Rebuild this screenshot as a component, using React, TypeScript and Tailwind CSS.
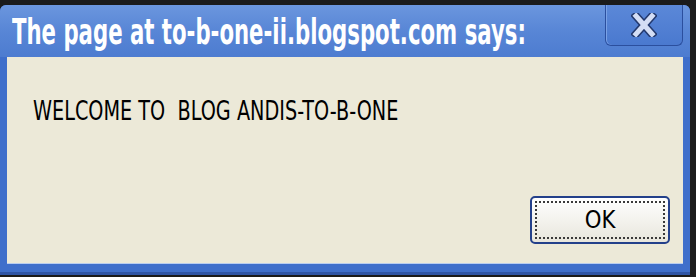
import React from 'react';

const CloseGlyph = () => (
  <svg width="26" height="24" viewBox="0 0 26 24">
    <path d="M5 3 L21 21 M21 3 L5 21" stroke="#23396e" strokeWidth="8" strokeLinecap="square" />
    <path d="M5 3 L21 21 M21 3 L5 21" stroke="#d4def5" strokeWidth="5" strokeLinecap="square" />
  </svg>
);

const font = { fontFamily: '"DejaVu Sans", "Liberation Sans", sans-serif' };

export default function App() {
  return (
    <div className="w-[696px] h-[277px] bg-[#1b1b1b] pt-[5px] overflow-hidden">
      <div className="w-[690px] h-[270px] flex flex-col bg-[#3f6fcb] rounded-t-[6px] border-b-[3px] border-[#2f55a6]">
        <header className="h-[52px] flex items-start justify-between pl-[12px] pr-[7px] bg-gradient-to-b from-[#6b96de] via-[#5886d6] to-[#4d7cd0] rounded-t-[6px]">
          <h1
            className="flex-1 min-w-0 mt-[9px] text-white text-[36px] font-bold leading-none whitespace-nowrap"
            style={font}
          >
            <span className="inline-block origin-left scale-x-[0.59]">The page at to-b-one-ii.blogspot.com says:</span>
          </h1>
          <div className="w-[78px] h-[41px] shrink-0 flex items-center justify-center rounded-b-[6px] border border-t-0 border-[#2b4f9e] bg-gradient-to-b from-[#5b88d8] to-[#4a79cf] shadow-[inset_1px_0_0_#7aa2e6]">
            <CloseGlyph />
          </div>
        </header>
        <div className="flex-1 flex px-[7px] pb-[8px]">
          <div className="flex-1 flex flex-col bg-[#ece9d8] border-b border-[#b9cdef]" style={font}>
            <p className="pl-[26px] pt-[41px] text-[26px] leading-[26px] text-black whitespace-pre">
              <span className="inline-block origin-left scale-x-[0.74]">WELCOME TO  BLOG ANDIS-TO-B-ONE</span>
            </p>
            <div className="flex-1 flex items-end justify-end pr-[13px] pb-[19px]">
              <button className="w-[140px] h-[48px] rounded-[5px] border-2 border-[#23408a] bg-gradient-to-b from-[#ffffff] to-[#e8e6dc] p-[3px]">
                <span className="flex h-full w-full items-center justify-center border-2 border-dotted border-[#3a3a3a] text-[25px] text-black">
                  <span className="inline-block scale-x-[0.85]">OK</span>
                </span>
              </button>
            </div>
          </div>
        </div>
      </div>
    </div>
  );
}
